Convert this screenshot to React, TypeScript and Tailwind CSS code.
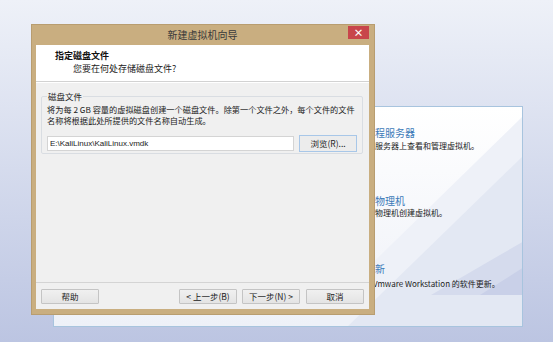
import React from "react";

const cjk = "font-['Noto_Sans_CJK_SC','Noto_Sans',sans-serif]";

function WinButton({ label }: { label: string }) {
  return (
    <div className="flex h-[15px] w-[58px] items-center justify-center rounded-[1px] border border-[#c4c4c4] bg-gradient-to-b from-[#f0f0f0] to-[#e4e4e4] text-[8.5px] leading-none text-[#222]">
      {label}
    </div>
  );
}

function HomePanel() {
  return (
    <div className="absolute left-[53px] top-[106px] h-[221px] w-[470px] overflow-hidden border border-[#a8c4de] bg-gradient-to-b from-white to-[#eef1f8]">
      <svg className="absolute inset-0" width="470" height="221" viewBox="0 0 470 221">
        <polygon points="470,8 470,221 252,221" fill="#eef1f8" />
        <polygon points="470,48 470,221 292,221" fill="#e3e8f3" />
        <polygon points="470,134 470,188 377,188" fill="#d5dbed" />
        <polygon points="470,160 470,188 426,188" fill="#c9d0e8" />
      </svg>
      <div className={`relative flex flex-col pl-[321px] pt-[19px] ${cjk}`}>
        <div className="h-[13px] text-[10px] leading-[13px] text-[#3c7ab8]">程服务器</div>
        <div className="mt-[1px] text-[8px] leading-[12px] text-[#222]">服务器上查看和管理虚拟机。</div>
        <div className="mt-[42px] h-[13px] text-[10px] leading-[13px] text-[#3c7ab8]">物理机</div>
        <div className="text-[8px] leading-[12px] text-[#222]">物理机创建虚拟机。</div>
        <div className="mt-[43px] h-[13px] text-[10px] leading-[13px] text-[#3c7ab8]">新</div>
        <div className="mt-[3px] whitespace-nowrap text-[8px] leading-[12px] text-[#222]">
          <span className="-ml-[2px]">Vmware Workstation 的软件更新。</span>
        </div>
      </div>
    </div>
  );
}

function Wizard() {
  return (
    <div className={`absolute left-[31px] top-[24px] flex h-[291px] w-[344px] flex-col border border-[#b89d70] bg-[#c9ae80] pb-[5px] pl-[4px] pr-[5px] ${cjk}`}>
      {/* title bar */}
      <div className="relative flex h-[20px] items-center justify-center">
        <span className="text-[10px] leading-none text-[#3a3a3a]">新建虚拟机向导</span>
        <div className="absolute right-[0px] top-[1px] flex h-[13px] w-[21px] items-center justify-center bg-[#c8454b] text-[10px] font-bold leading-none text-white">
          ×
        </div>
      </div>

      <div className="flex flex-1 flex-col bg-[#f0f0f0]">
        {/* header */}
        <div className="h-[37px] border-b border-[#d2d2d2] bg-white pl-[19px] pt-[5px]">
          <div className="text-[9px] font-bold leading-[12px] text-[#111]">指定磁盘文件</div>
          <div className="pl-[18px] pt-[1px] text-[9px] leading-[12px] text-[#222]">您要在何处存储磁盘文件?</div>
        </div>

        {/* body */}
        <div className="flex-1 border-t border-white px-[5px] pr-[6px] pt-[8px]">
          <fieldset className="rounded-[2px] border border-[#d9dde2] px-[5px] pb-[1px]">
            <legend className="px-[1px] text-[8.5px] leading-[11px] text-[#222]">磁盘文件</legend>
            <div className="whitespace-nowrap pt-[2px] text-[8.2px] leading-[11px] text-[#222]">
              将为每 2 GB 容量的虚拟磁盘创建一个磁盘文件。除第一个文件之外，每个文件的文件
              <br />
              名称将根据此处所提供的文件名称自动生成。
            </div>
            <div className="mt-[9px] flex items-center gap-[5px]">
              <div className="flex h-[15px] w-[247px] items-center border border-[#d4d4d4] bg-white pl-[2px] font-['Liberation_Sans',sans-serif] text-[8px] leading-none text-[#222]">
                E:\KaliLinux\KaliLinux.vmdk
              </div>
              <div className="flex h-[17px] w-[58px] items-center justify-center border border-[#a8c7e8] bg-[#ececec] text-[8.5px] leading-none text-[#222]">
                浏览(R)...
              </div>
            </div>
          </fieldset>
        </div>

        {/* footer */}
        <div className="flex h-[27px] items-start border-t border-[#d4d4d4] px-[5px] pt-[6px]">
          <WinButton label="帮助" />
          <div className="flex-1" />
          <div className="flex gap-[5px]">
            <WinButton label="< 上一步(B)" />
            <WinButton label="下一步(N) >" />
            <div className="w-[1px]" />
          </div>
          <WinButton label="取消" />
        </div>
      </div>
    </div>
  );
}

export default function App() {
  return (
    <div className="relative h-[342px] w-[553px] overflow-hidden bg-gradient-to-b from-[#eef1f8] to-[#bcc5e2]">
      <HomePanel />
      <Wizard />
    </div>
  );
}
